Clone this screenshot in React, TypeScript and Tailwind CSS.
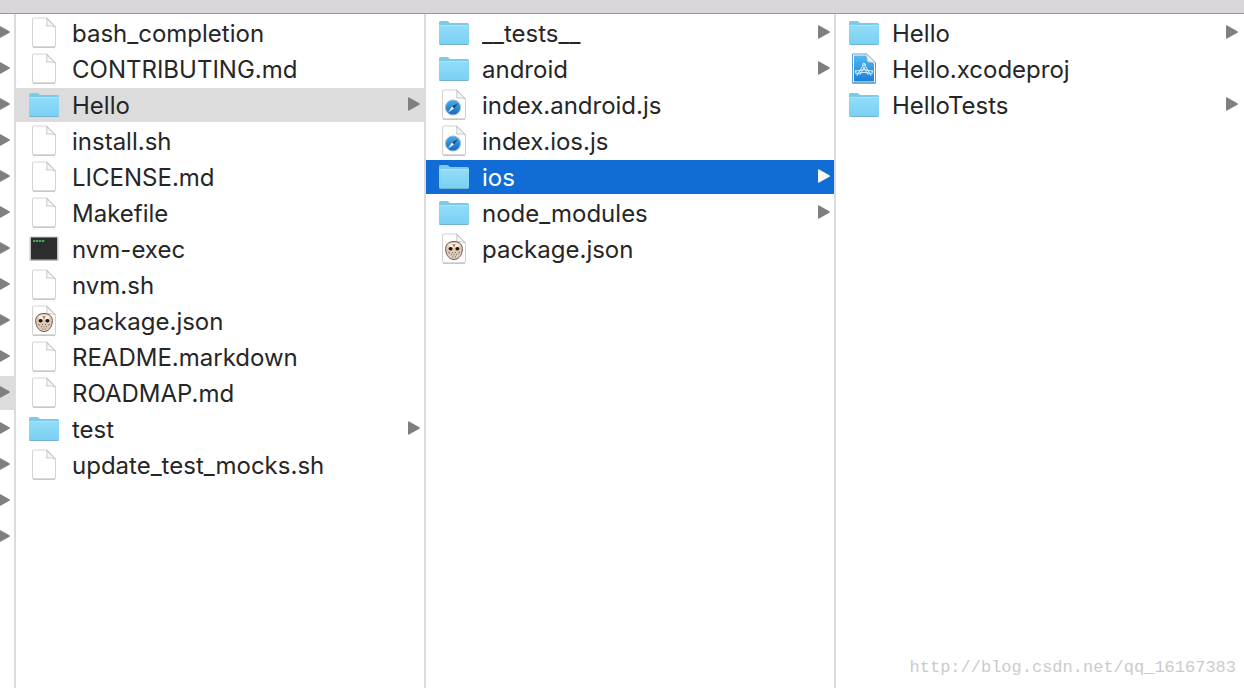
import clsx from "clsx";

type Kind = "file" | "folder" | "exec" | "json" | "script" | "xcode";
type Entry = { name: string; kind: Kind };

const NVM: Entry[] = [
  { name: "bash_completion", kind: "file" },
  { name: "CONTRIBUTING.md", kind: "file" },
  { name: "Hello", kind: "folder" },
  { name: "install.sh", kind: "file" },
  { name: "LICENSE.md", kind: "file" },
  { name: "Makefile", kind: "file" },
  { name: "nvm-exec", kind: "exec" },
  { name: "nvm.sh", kind: "file" },
  { name: "package.json", kind: "json" },
  { name: "README.markdown", kind: "file" },
  { name: "ROADMAP.md", kind: "file" },
  { name: "test", kind: "folder" },
  { name: "update_test_mocks.sh", kind: "file" },
];

const HELLO: Entry[] = [
  { name: "__tests__", kind: "folder" },
  { name: "android", kind: "folder" },
  { name: "index.android.js", kind: "script" },
  { name: "index.ios.js", kind: "script" },
  { name: "ios", kind: "folder" },
  { name: "node_modules", kind: "folder" },
  { name: "package.json", kind: "json" },
];

const IOS: Entry[] = [
  { name: "Hello", kind: "folder" },
  { name: "Hello.xcodeproj", kind: "xcode" },
  { name: "HelloTests", kind: "folder" },
];

// The parent column is scrolled away, only its arrows still show.
const PARENT_ROWS = 15;
const PARENT_SELECTED = 10;

function Arrow() {
  return (
    <svg viewBox="0 0 12 16" className="h-4 w-3 shrink-0" fill="currentColor" aria-hidden="true">
      <path d="M0 1.2Q0 0 1.1.5L11.4 6.2Q12.4 7 11.4 7.8L1.1 13.5Q0 14 0 12.8Z" />
    </svg>
  );
}

function Sheet() {
  return (
    <>
      <path d="M5.500 1H19L27.500 9.500V29Q27.500 30 26.500 30H5.500Q4.500 30 4.500 29V2Q4.500 1 5.500 1Z" fill="#fff" stroke="#d2d2d2" />
      <path d="M5 30.200H27" stroke="#b8b8b8" />
      <path d="M18.500 1.500Q19.500 5 18.500 9Q23 8 27.500 10Z" fill="#f7f7f7" stroke="#cacaca" strokeLinejoin="round" />
    </>
  );
}

function FolderIcon() {
  return (
    <>
      <path d="M1 7V5.500Q1 4 2.500 4H9Q10 4 10.700 4.700L12 6H29.500Q31 6 31 7.500V12H1Z" fill="#7cc9e8" />
      <path d="M1 8.500H31V26Q31 27.500 29.500 27.500H2.500Q1 27.500 1 26Z" fill="url(#folder-front)" />
      <path d="M1.500 8.500H30.500" stroke="#a4e3fa" />
      <path d="M1.500 27.500H30.500" stroke="#72b4cf" />
    </>
  );
}

function ExecIcon() {
  return (
    <>
      <rect x="1.500" y="3.500" width="29" height="24.500" rx="1" fill="#c4c4c4" />
      <rect x="3" y="4.500" width="26" height="22" fill="#2c2d2d" />
      <path d="M5 8h2.300M8 8h2.300M11 8h2.300M14 8h2.300" stroke="#3fae5c" strokeWidth="2" />
    </>
  );
}

function JsonIcon() {
  return (
    <>
      <Sheet />
      <path d="M16 8.500C22 8.500 24.800 12 24.300 17C23.800 22.500 20.500 26.500 16 26.500S8.200 22.500 7.700 17C7.200 12 10 8.500 16 8.500Z" fill="#dccbb9" stroke="#6f5b4d" />
      <path d="M10 12Q16 8 22 12L21 13.500L16 14.500L11 13.500Z" fill="#f6ede3" />
      <ellipse cx="12.600" cy="15.800" rx="2" ry="1.700" fill="#201714" />
      <ellipse cx="19.400" cy="15.800" rx="2" ry="1.700" fill="#201714" />
      <path d="M15 11L16 13.500L17 11M10 19L12 20.500M22 19L20 20.500" stroke="#b85d48" fill="none" />
      <path d="M14 19.500h.8M17.200 19.500h.8M13 21.700h.8M15.600 21.700h.8M18.200 21.700h.8M14.500 24h.8M17 24h.8" stroke="#5c4638" />
    </>
  );
}

function ScriptIcon() {
  return (
    <>
      <Sheet />
      <circle cx="15" cy="18.500" r="7.500" fill="url(#compass)" stroke="#9fb4c4" />
      <path d="M20 14L16 19.500L14 17.500Z" fill="#31434f" />
      <path d="M10 23.500L14 17.500L16 19.500Z" fill="#e8f4fb" />
    </>
  );
}

function XcodeIcon() {
  return (
    <>
      <path d="M4.500 1H19L27.500 9.500V30H4.500Z" fill="#fff" stroke="#5d9fcb" />
      <path d="M6 2.500H18L26 10.500V28.500H6Z" fill="url(#blueprint)" />
      <path d="M18.500 1L19.500 8.500L27.500 10Z" fill="#eaf3f8" stroke="#bccfdb" />
      <g fill="none" stroke="#d9f2ff" strokeLinecap="round">
        <path d="M15.300 12L9 22.500M16.700 12L23 22.500M16 14.500L12 21.500M16 14.500L20 21.500" />
        <circle cx="16" cy="11.500" r="1.300" />
        <path d="M7.500 18Q16 15.500 24.500 18M8 20.500Q16 18 24 20.500M7.500 18L8 20.500M24.500 18L24 20.500" />
      </g>
      <path d="M4.500 30H27.500" stroke="#4886b3" />
    </>
  );
}

function ItemIcon({ kind }: { kind: Kind }) {
  return (
    <svg viewBox="0 0 32 32" className="size-8 shrink-0" fill="none" aria-hidden="true">
      {kind === "file" && <Sheet />}
      {kind === "folder" && <FolderIcon />}
      {kind === "exec" && <ExecIcon />}
      {kind === "json" && <JsonIcon />}
      {kind === "script" && <ScriptIcon />}
      {kind === "xcode" && <XcodeIcon />}
    </svg>
  );
}

function Gradients() {
  return (
    <svg className="absolute size-0" aria-hidden="true">
      <defs>
        <linearGradient id="folder-front" x1="0" y1="0" x2="0" y2="1">
          <stop offset="0" stopColor="#93dcf8" />
          <stop offset="1" stopColor="#78d0f3" />
        </linearGradient>
        <linearGradient id="compass" x1="0" y1="0" x2="0" y2="1">
          <stop offset="0" stopColor="#3fb0f0" />
          <stop offset="1" stopColor="#1567c4" />
        </linearGradient>
        <linearGradient id="blueprint" x1="0" y1="0" x2="0" y2="1">
          <stop offset="0" stopColor="#52b8f0" />
          <stop offset="1" stopColor="#1c7fd8" />
        </linearGradient>
      </defs>
    </svg>
  );
}

type ColumnProps = {
  label: string;
  entries: Entry[];
  selected?: string;
  focused?: boolean;
};

function Column({ label, entries, selected, focused }: ColumnProps) {
  return (
    <ul
      aria-label={label}
      className="flex min-w-0 flex-col gap-0.5 border-r-2 border-[#dcdcdc] pt-0.5 last:border-transparent"
    >
      {entries.map((entry) => {
        const active = entry.name === selected;
        return (
          <li key={entry.name}>
            <button
              type="button"
              aria-pressed={active}
              className={clsx(
                "flex h-[34px] w-full items-center gap-3 pr-1 pl-3 text-left",
                active && focused && "bg-[#116cd6] text-white",
                active && !focused && "bg-[#dcdcdc]",
              )}
            >
              <ItemIcon kind={entry.kind} />
              <span className="flex-1 truncate pt-0.5">{entry.name}</span>
              {entry.kind === "folder" && (
                <span className={active && focused ? "text-white" : "text-[#7f7f7f]"}>
                  <Arrow />
                </span>
              )}
            </button>
          </li>
        );
      })}
    </ul>
  );
}

export default function App() {
  return (
    <div className="flex min-h-screen flex-col bg-white font-['Inter',sans-serif] text-2xl text-[#262626]">
      <Gradients />
      <header className="h-3.5 border-b border-[#98969a] bg-[#d8d6d9]" />
      <main className="grid flex-1 grid-cols-[16px_410fr_410fr_408fr]">
        <div className="flex flex-col gap-0.5 overflow-hidden border-r-2 border-[#dcdcdc] pt-0.5 text-[#7f7f7f]">
          {Array.from({ length: PARENT_ROWS }, (_, i) => (
            <div
              key={i}
              className={clsx(
                "flex h-[34px] items-center justify-end pr-1",
                i === PARENT_SELECTED && "bg-[#dcdcdc]",
              )}
            >
              <Arrow />
            </div>
          ))}
        </div>
        <Column label="nvm" entries={NVM} selected="Hello" />
        <Column label="Hello" entries={HELLO} selected="ios" focused />
        <Column label="ios" entries={IOS} />
      </main>
      <p className="absolute right-2 bottom-2 font-['Liberation_Mono',monospace] text-[17px] leading-6 text-[#cbcbcb]">
        http://blog.csdn.net/qq_16167383
      </p>
    </div>
  );
}
